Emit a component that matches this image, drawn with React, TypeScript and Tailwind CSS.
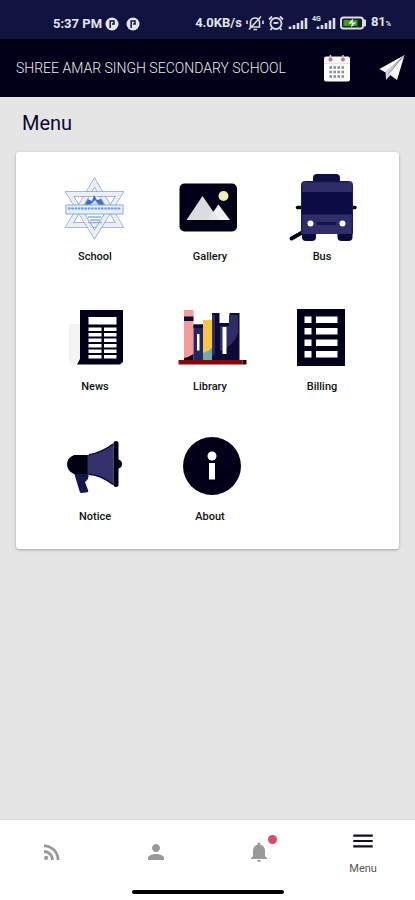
import React from 'react';
import { MdMenu, MdNotifications, MdPerson, MdRssFeed } from 'react-icons/md';

const iconBox = 'block h-[72px] w-[80px]';

const SchoolIcon = () => (
  <svg viewBox="0 0 80 72" className={iconBox} aria-hidden="true">
    <g fill="none" strokeLinejoin="miter">
      <path d="M39.500 10.500 L64.500 53 H14.500 Z" stroke="#959eb2" strokeWidth="5.500" />
      <path d="M39.500 10.500 L64.500 53 H14.500 Z" stroke="#eaf0fb" strokeWidth="4.200" />
      <path d="M39.500 62.500 L64.500 22 H14.500 Z" stroke="#959eb2" strokeWidth="5.500" />
      <path d="M39.500 62.500 L64.500 22 H14.500 Z" stroke="#eaf0fb" strokeWidth="4.200" />
    </g>
    <path d="M29 34 L33 27 L37 29 L39 23 L42 28 L46 27 L50 34 Z" fill="#3f6fc4" />
    <path d="M35 33 L40 28 L44 33 Z" fill="#c9dbf7" />
    <rect x="11" y="33" width="57" height="9" fill="#e6effc" stroke="#8fa8d4" strokeWidth="1" />
    <path d="M13 36.500 H66" stroke="#6f98da" strokeWidth="2" strokeDasharray="2.500 0.800" />
    <path d="M33 45 H46 M35 48 H45 M33 50.500 H47" stroke="#8db0e6" strokeWidth="1.500" />
  </svg>
);

const GalleryIcon = () => (
  <svg viewBox="0 0 80 72" className={iconBox} aria-hidden="true">
    <rect x="9.500" y="11.500" width="57.500" height="48" rx="5" fill="#000018" />
    <path d="M16.500 48 L32.500 24 L49 48 Z" fill="#dcdcdf" />
    <path d="M37.500 48 L48.500 32.500 L60 48 Z" fill="#f1f1f3" />
    <path d="M37.500 48 L43.500 39.500 L49 48 Z" fill="#e6e6e9" />
    <circle cx="53.500" cy="24" r="5" fill="#eeeebb" />
  </svg>
);

const BusIcon = () => (
  <svg viewBox="0 0 80 72" className={iconBox} aria-hidden="true">
    <path d="M9.500 66.500 L22 59.500" stroke="#000010" strokeWidth="4" strokeLinecap="round" />
    <path d="M15.500 35.500 H73" stroke="#000010" strokeWidth="3.500" strokeLinecap="round" />
    <path d="M31 12 V6 Q31 2 35 2 H54 Q58 2 58 6 V12 Z" fill="#0f0f45" />
    <rect x="20" y="58" width="14" height="11" rx="4" fill="#0b0b38" />
    <rect x="55.500" y="58" width="15" height="11" rx="4" fill="#0b0b38" />
    <path d="M19 13 Q19 9 23 9 H67 Q71 9 71 13 V62 H19 Z" fill="#302e69" />
    <path d="M24 9.800 H66" stroke="#17174f" strokeWidth="1.600" />
    <path d="M19.700 13 V62 M70.300 13 V62" stroke="#1c1c5a" strokeWidth="1.400" />
    <rect x="20" y="20" width="50" height="22.500" fill="#0c0b45" />
    <rect x="35" y="50" width="19" height="3" fill="#14134f" />
    <circle cx="28.500" cy="51.500" r="3" fill="#fff" />
    <circle cx="60.500" cy="51.500" r="3" fill="#fff" />
  </svg>
);

const NewsIcon = () => (
  <svg viewBox="0 0 80 72" className={iconBox} aria-hidden="true">
    <path d="M14 22 H25 V62 H17 Q14 62 14 58 Z" fill="#f3f3f5" />
    <path d="M25 8 H68 V60 L65 62.500 H22 L25 57 Z" fill="#000018" />
    <rect x="33.500" y="15" width="28" height="7.500" fill="#fff" />
    {[25.5, 31, 36.5, 42, 47.5, 53].map((y) => (
      <g key={y} fill="#fff">
        <rect x="33.500" y={y} width="13" height="3.500" />
        <rect x="49" y={y} width="12.500" height="3.500" />
      </g>
    ))}
  </svg>
);

const LibraryIcon = () => (
  <svg viewBox="0 0 80 72" className={iconBox} aria-hidden="true">
    <rect x="14" y="8" width="9.500" height="50.500" fill="#f29a9c" />
    <rect x="14" y="14.500" width="9.500" height="4.500" fill="#0b0b38" />
    <path d="M14 58.500 V56 Q19 55 23.500 52 V58.500 Z" fill="#0b0b25" />
    <rect x="23.500" y="22.500" width="9.500" height="36" fill="#24265f" />
    <path d="M23.500 22.500 H33 V26 H23.500 Z" fill="#0c0d35" />
    <rect x="27" y="32" width="2.500" height="16.500" fill="#fff" />
    <rect x="33" y="18" width="9" height="40.500" fill="#f5c843" />
    <path d="M33 51 Q38 50 42 46 V58.500 H33 Z" fill="#72a9a4" />
    <path d="M42 11 H49.500 V21 H59.500 V11 H69.500 V58.500 H42 Z" fill="#0b0b35" />
    <path d="M42 13 H45 V52 Q43 54 42 54 Z" fill="#2d2d66" />
    <path d="M50 24 H59 V13 H68 V31 Q64 44 50 49 Z" fill="#2d2d66" />
    <rect x="52.500" y="25" width="4" height="27" fill="#fff" />
    <rect x="8.500" y="58" width="64" height="4.500" fill="#85090d" />
    <rect x="72.500" y="58" width="4" height="4.500" fill="#210009" />
  </svg>
);

const BillingIcon = () => (
  <svg viewBox="0 0 80 72" className={iconBox} aria-hidden="true">
    <rect x="15" y="7" width="48" height="57" fill="#000018" />
    {[14.5, 26, 37.5, 49].map((y) => (
      <g key={y} fill="#fff">
        <rect x="22.500" y={y} width="7" height="6.500" />
        <rect x="34" y={y} width="21.500" height="6.500" />
      </g>
    ))}
  </svg>
);

const NoticeIcon = () => (
  <svg viewBox="0 0 80 72" className={iconBox} aria-hidden="true">
    <path d="M19 41 H34 L33 47 L30 50 L33 58 Q34 60 31 60.500 L26 61 Q25 61 24.500 59 Z" fill="#17164c" />
    <path d="M19 23 H33 V42 H19 Q12 39 12 32 Q12 26 19 23 Z" fill="#000014" />
    <path d="M32.500 23 Q46 21 58.500 11.500 V53 Q46 43 32.500 42 Z" fill="#33306b" />
    <path d="M34 22.700 Q47 20.500 58 12 M34 42.200 Q47 43.500 58 52.500" fill="none" stroke="#0d0c35" strokeWidth="1.400" />
    <path d="M63 27.500 Q67 28 67 32 Q67 36 63 36.500 Z" fill="#000014" />
    <rect x="58.500" y="9" width="5" height="46" rx="2.500" fill="#000014" />
  </svg>
);

const AboutIcon = () => (
  <svg viewBox="0 0 80 72" className={iconBox} aria-hidden="true">
    <circle cx="42" cy="34" r="29" fill="#000018" />
    <circle cx="42" cy="24" r="4.500" fill="#fff" />
    <path d="M39 31 H45 V47.500 H39 Z" fill="#fff" />
  </svg>
);

const menuItems = [
  { label: 'School', icon: SchoolIcon },
  { label: 'Gallery', icon: GalleryIcon },
  { label: 'Bus', icon: BusIcon },
  { label: 'News', icon: NewsIcon },
  { label: 'Library', icon: LibraryIcon },
  { label: 'Billing', icon: BillingIcon },
  { label: 'Notice', icon: NoticeIcon },
  { label: 'About', icon: AboutIcon },
];

const AppBadge = () => (
  <svg viewBox="0 0 14 14" className="h-[14px] w-[14px]" aria-hidden="true">
    <circle cx="7" cy="7" r="6.500" fill="#e4e4ea" />
    <path d="M5.200 11 V4 H9 V7 H7" fill="none" stroke="#10133f" strokeWidth="1.500" />
  </svg>
);

const Signal = () => (
  <svg viewBox="0 0 20 14" className="h-[14px] w-[20px]" aria-hidden="true">
    <path d="M2 10.500V13M6 9V13M10 7V13M14 4.500V13M18 2V13" stroke="#dcdce4" strokeWidth="2.600" />
  </svg>
);

const StatusBar = () => (
  <div className="flex h-[39px] items-end justify-between bg-[#10133f] pr-6 pb-[7px] pl-[53px] text-[13px] leading-4 font-bold text-[#e4e4ea]">
    <div className="flex items-center gap-[3px]">
      <span>5:37 PM</span>
      <AppBadge />
      <span className="w-px" />
      <AppBadge />
    </div>
    <div className="flex items-center gap-1">
      <span>4.0KB/s</span>
      <svg viewBox="0 0 18 16" className="h-4 w-[18px]" fill="none" stroke="#dcdce4" strokeWidth="1.600" aria-hidden="true">
        <path d="M4.500 12 V7 Q5 3 9 3 Q13 3 13.500 7 V12 Z M7.500 14.500 H11 M15 1.500 L3 14.500 M1 5.500 V9 M17 5.500 V9" />
      </svg>
      <svg viewBox="0 0 16 16" className="h-4 w-4" fill="none" stroke="#dcdce4" strokeWidth="1.800" aria-hidden="true">
        <circle cx="8" cy="8.500" r="5.500" />
        <path d="M1 4.500 L4 1.500 M15 4.500 L12 1.500 M5.500 8 H8.500 L10.500 7.500 M4 13 L2.500 15 M12 13 L13.500 15" />
      </svg>
      <Signal />
      <div className="relative ml-1">
        <Signal />
        <span className="absolute -top-px -left-1 text-[7px] leading-[8px]">4G</span>
      </div>
      <svg viewBox="0 0 27 14" className="h-[14px] w-[27px]" aria-hidden="true">
        <rect x="1" y="1.500" width="22" height="11" rx="2.500" fill="#12202a" stroke="#dcdce4" strokeWidth="2" />
        <rect x="3.500" y="4" width="14" height="6" fill="#3f9b1d" />
        <path d="M24 4 H25.500 V10 H24" fill="#dcdce4" stroke="#dcdce4" />
        <path d="M13 2.500 L8.500 7.500 H12 L11 11.500 L16 6.500 H12.500 Z" fill="#fff" />
      </svg>
      <span>
        81<span className="text-[7px]">%</span>
      </span>
    </div>
  </div>
);

const Header = () => (
  <header className="flex h-[58px] items-center bg-[#000018] pr-[10px] pl-4">
    <h1 className="flex-1 text-[14px] leading-5 font-light whitespace-nowrap text-[#eeeeee]">
      SHREE AMAR SINGH SECONDARY SCHOOL
    </h1>
    <button type="button" aria-label="Calendar" className="mr-7">
      <svg viewBox="0 0 28 28" className="block h-7 w-7">
        <rect x="1" y="2.500" width="26" height="25" rx="2" fill="#fafafa" />
        <path d="M1 9.500 H27" stroke="#e4e4e6" />
        <path d="M7.500 4 V1 M20 4 V1" stroke="#d9d9dc" strokeWidth="1.500" />
        <circle cx="7.500" cy="5.500" r="2" fill="#c96f7d" />
        <circle cx="20" cy="5.500" r="2" fill="#c96f7d" />
        <path d="M6.500 13.500 H22 M6.500 18 H22 M6.500 22.500 H22" stroke="#8b8d97" strokeWidth="2.500" strokeDasharray="2.500 1.500" />
      </svg>
    </button>
    <button type="button" aria-label="Send">
      <svg viewBox="0 0 26 26" className="block h-[26px] w-[26px]">
        <path d="M25.500 0 L0.500 14 L6.500 17.500 Z" fill="#fff" />
        <path d="M25.500 0 L6.500 17.500 L7 25 L11.500 20 Z" fill="#d8d8dc" />
        <path d="M25.500 0 L10.500 19.500 L18 25 Z" fill="#fafafa" />
        <path d="M25 0.500 L9.500 18.500" stroke="#8f8f96" strokeWidth="1" />
      </svg>
    </button>
  </header>
);

const BottomNav = () => (
  <nav className="border-t border-[#dcdcdc] bg-white pb-[6px]">
    <div className="grid h-[70px] grid-cols-4 text-[#999999]">
      <a href="#feed" aria-label="Feed" className="flex justify-center pt-5">
        <MdRssFeed size={24} />
      </a>
      <a href="#profile" aria-label="Profile" className="flex justify-center pt-5">
        <MdPerson size={24} />
      </a>
      <a href="#notifications" aria-label="Notifications" className="flex justify-center pt-5">
        <span className="relative h-6">
          <MdNotifications size={24} />
          <span className="absolute -top-[5px] -right-[6px] h-[9px] w-[9px] rounded-full bg-[#d64a6b]" />
        </span>
      </a>
      <a href="#menu" className="flex flex-col items-center pt-2 text-[11px] leading-4 text-[#555555]">
        <MdMenu size={26} className="mb-[7px] text-[#111122]" />
        Menu
      </a>
    </div>
    <div className="mx-auto h-1 w-[152px] rounded-full bg-black" />
  </nav>
);

const App: React.FC = () => {
  return (
    <div className="flex min-h-screen flex-col bg-[#e5e5e5] font-['Roboto',sans-serif]">
      <StatusBar />
      <Header />
      <main className="flex-1 px-4 pt-3">
        <h2 className="px-[6px] text-[20px] leading-7 text-[#0a0a2a]">Menu</h2>
        <div className="mt-[15px] grid grid-cols-[114fr_116fr_108fr] gap-y-[37px] rounded-[3px] bg-white pt-5 pr-[23px] pb-6 pl-[22px] shadow-[0_1px_3px_rgba(0,0,0,0.3)]">
          {menuItems.map(({ label, icon: Icon }) => (
            <button key={label} type="button" className="flex flex-col items-center">
              <Icon />
              <span className="mt-[5px] text-[11px] leading-4 font-medium text-[#111111]">{label}</span>
            </button>
          ))}
        </div>
      </main>
      <BottomNav />
    </div>
  );
};

export default App;
